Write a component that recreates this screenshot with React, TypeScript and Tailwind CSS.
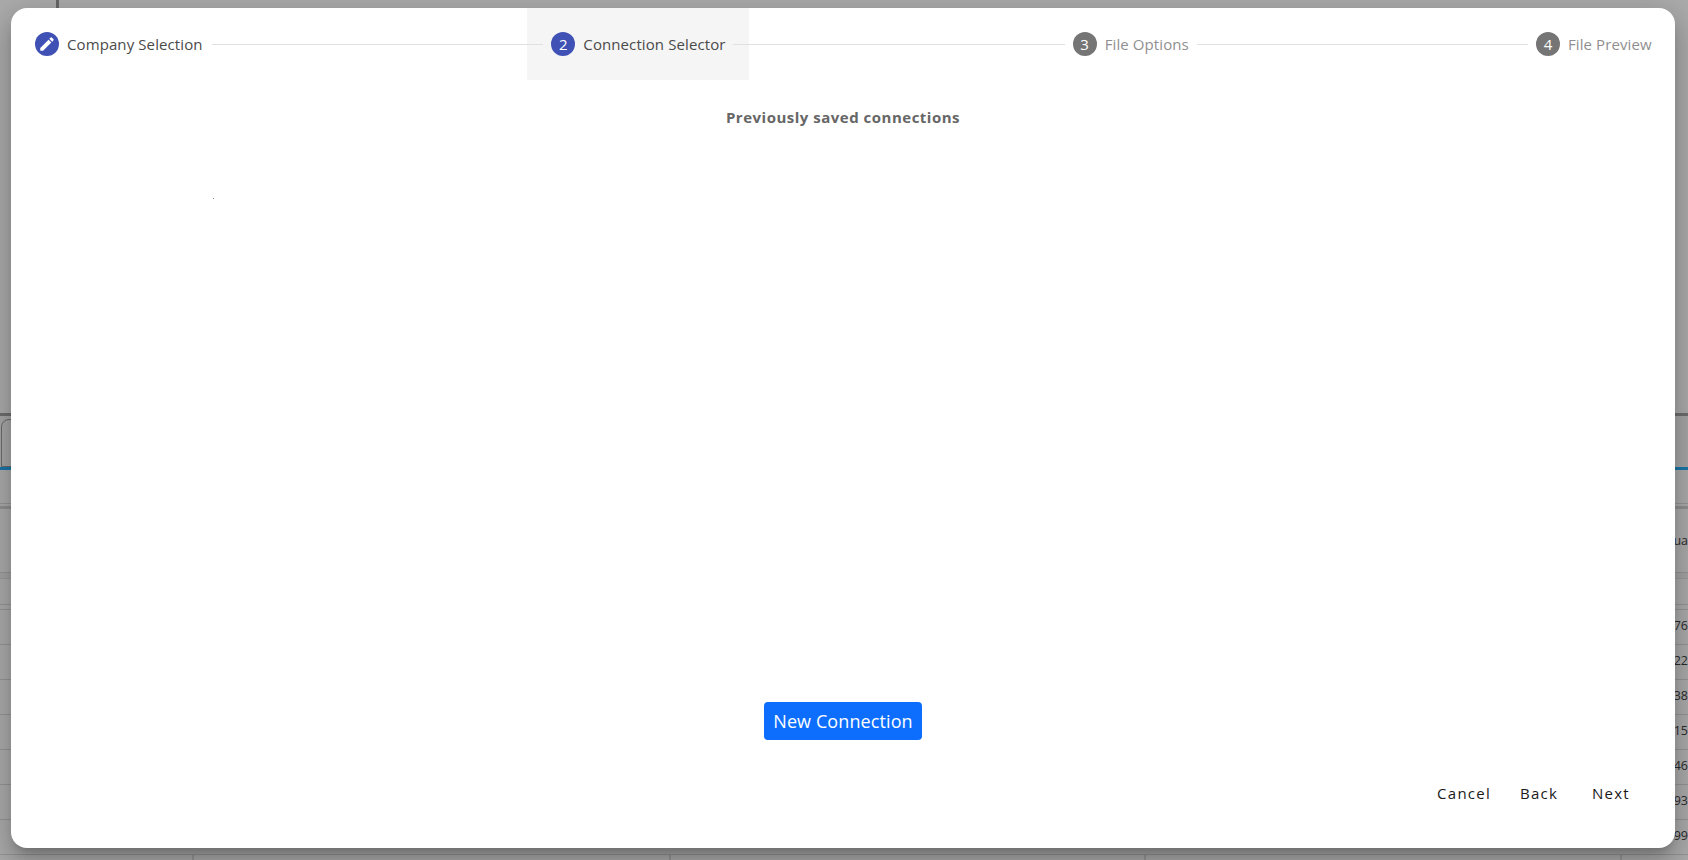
import React from "react";

const font = { fontFamily: '"Open Sans", "Noto Sans", sans-serif' };

function Row({ h, v, cls = "border-b border-[#949494]" }: { h: string; v?: string; cls?: string }) {
  return (
    <div className={`${h} ${cls} flex justify-end items-center`}>
      {v ? <span className="text-[12.5px] text-[#2a2a2a] whitespace-nowrap">{v}</span> : null}
    </div>
  );
}

function Cells() {
  return (
    <div className="flex h-full">
      <div className="w-[194px] border-r-2 border-[#969696]" />
      <div className="w-[477px] border-r-2 border-[#969696]" />
      <div className="w-[475px] border-r-2 border-[#969696]" />
      <div className="w-[476px] border-r-2 border-[#969696]" />
    </div>
  );
}

function Step({ n, label, width, active, done }: { n: string; label: string; width: string; active?: boolean; done?: boolean }) {
  return (
    <div className={`flex items-center gap-2 shrink-0 h-[72px] ${active ? "bg-[#f5f5f5] px-6 -mx-6" : ""}`}>
      <div className={`relative w-6 h-6 rounded-full flex items-center justify-center text-white text-[15px] ${active || done ? "bg-[#3f51b5]" : "bg-[#757575]"}`}>
        {done ? (
          <svg viewBox="0 0 24 24" className="w-[18px] h-[18px]" fill="currentColor">
            <path d="M3 17.25V21h3.75L17.81 9.94l-3.75-3.75L3 17.25zM20.71 7.04a1 1 0 0 0 0-1.41l-2.34-2.34a1 1 0 0 0-1.41 0l-1.83 1.83 3.75 3.75 1.83-1.83z" />
          </svg>
        ) : (
          n
        )}
      </div>
      <span className={`${width} text-[15px] tracking-[0.1px] whitespace-nowrap ${active || done ? "text-[#4a4a4a]" : "text-[#8f8f8f]"}`}>{label}</span>
    </div>
  );
}

function Line() {
  return <div className="relative flex-1 h-px bg-[#e0e0e0] mx-2" />;
}

export default function App() {
  const footerBtn = "h-9 min-w-16 px-2 text-[15px] font-medium tracking-[1.25px] text-[#1a1a1a]";
  return (
    <div className="relative w-[1688px] h-[860px] overflow-hidden bg-[#aaaaaa]" style={font}>
      <div className="flex flex-col h-full">
        <div className="h-[413px] pl-[56px]">
          <div className="w-[3px] h-[10px] bg-[#666]" />
        </div>
        <div className="h-[3px] bg-[#6e6e6e]" />
        <div className="h-[51px] pl-[1px] bg-[#a6a6a6]">
          <div className="w-[40px] h-[48px] mt-[3px] border border-[#6b6b6b] rounded-t-lg" />
        </div>
        <div className="h-[3px] bg-[#1a76a8]" />
        <Row h="h-[34px]" />
        <div className="h-[2px]" />
        <div className="h-[3px] bg-[#8f8f8f]" />
        <Row h="h-[64px]" v="ua" cls="border-b border-[#949494] pt-[2px]" />
        <Row h="h-[6px]" cls="bg-[#a3a3a3] border-b border-[#9a9a9a]" />
        <Row h="h-[26px]" />
        <Row h="h-[5px]" />
        <Row h="h-[35px]" v="76" cls="border-b border-[#949494] pb-[2px]" />
        <Row h="h-[35px]" v="22" cls="border-b border-[#949494] pb-[2px]" />
        <Row h="h-[35px]" v="38" cls="border-b border-[#949494] pb-[2px]" />
        <Row h="h-[35px]" v="15" cls="border-b border-[#949494] pb-[2px]" />
        <Row h="h-[35px]" v="46" cls="border-b border-[#949494] pb-[2px]" />
        <Row h="h-[35px]" v="93" cls="border-b border-[#949494] pb-[2px]" />
        <Row h="h-[35px]" v=".99" cls="border-b border-[#949494] pb-[2px]" />
        <div className="flex-1 min-h-0">
          <Cells />
        </div>
      </div>

      <div className="absolute left-[11px] top-[8px] w-[1664px] h-[840px] bg-white rounded-2xl shadow-[0_8px_10px_-5px_rgba(0,0,0,0.2),0_16px_24px_2px_rgba(0,0,0,0.14),0_6px_30px_5px_rgba(0,0,0,0.12)] flex flex-col">
        <div className="flex items-center px-6">
          <Step n="1" label="Company Selection" width="w-[137px]" done />
          <Line />
          <Step n="2" label="Connection Selector" width="w-[142px]" active />
          <Line />
          <Step n="3" label="File Options" width="w-[84px]" />
          <Line />
          <Step n="4" label="File Preview" width="w-[83px]" />
        </div>
        <div className="text-center text-[15px] leading-[22px] font-bold tracking-[0.5px] text-[#666] mt-[26px]">Previously saved connections</div>
        <div className="flex-1 relative">
          <div className="absolute left-[202px] top-[70px] w-px h-px bg-[#888]" />
        </div>
        <div className="flex justify-center mb-[35px]">
          <button className="h-[38px] w-[158px] rounded bg-[#0d6efd] text-white text-[18px] tracking-[0.1px] whitespace-nowrap">New Connection</button>
        </div>
        <div className="flex justify-end items-center gap-2 pr-8 pb-[37px]">
          <button className={footerBtn}>Cancel</button>
          <button className={footerBtn}>Back</button>
          <button className={footerBtn}>Next</button>
        </div>
      </div>
    </div>
  );
}
